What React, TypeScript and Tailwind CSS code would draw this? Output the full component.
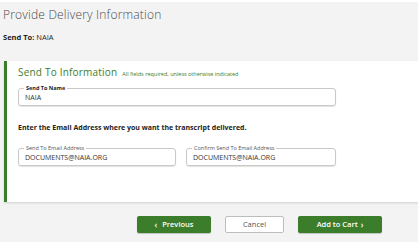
import React from "react";

const GREEN = "bg-[#3c7d2b]";

// bordered input with its label sitting on the top border
const Field: React.FC<{ label: string; value: string; bold?: boolean; className?: string }> = ({ label, value, bold, className }) => (
  <div className={`relative flex h-[18px] items-center rounded-[3px] border border-[#c9c9c9] px-[6px] shadow-[0_1px_1px_rgba(0,0,0,0.12)] ${className ?? ""}`}>
    <span
      className={`absolute -top-[4px] left-[5px] bg-white px-[2px] text-[5.5px] leading-[7px] ${bold ? "font-bold text-[#222]" : "text-[#555]"}`}
    >
      {label}
    </span>
    <span className="pt-[2px] text-[7px] leading-[10px] text-[#333]">{value}</span>
  </div>
);

export default function App() {
  return (
    <div className="flex h-[242px] w-[418px] flex-col bg-white pt-[2px] font-['Open_Sans',sans-serif]">
      <div className="flex flex-1 flex-col bg-[#f3f3f3]">
        {/* Header */}
        <div className="h-[59px] px-[3px] pt-[4px]">
          <h1 className="text-[12px] font-light leading-[17px] tracking-[0.2px] text-[#4a4a4a]">Provide Delivery Information</h1>
          <p className="mt-[9px] text-[7.5px] leading-[10px] text-[#222]">
            <span className="font-bold">Send To:</span> NAIA
          </p>
        </div>

        {/* Card */}
        <div className="ml-[4px] h-[141px] border-l-[3px] border-[#3c7d2b] bg-white pl-[11px] pt-[4px] shadow-[0_1px_2px_rgba(0,0,0,0.15)]">
          <div className="flex items-baseline gap-[5px]">
            <h2 className="text-[10px] leading-[15px] tracking-[0.2px] text-[#3c7d2b]">Send To Information</h2>
            <span className="text-[5.5px] text-[#3c7d2b]">All fields required, unless otherwise indicated</span>
          </div>
          <Field label="Send To Name" value="NAIA" bold className="mt-[8px] w-[318px]" />
          <p className="mt-[17px] text-[7px] font-bold leading-[10px] text-[#222]">
            Enter the Email Address where you want the transcript delivered.
          </p>
          <div className="mt-[15px] flex gap-[10px]">
            <Field label="Send To Email Address" value="DOCUMENTS@NAIA.ORG" className="w-[158px]" />
            <Field label="Confirm Send To Email Address" value="DOCUMENTS@NAIA.ORG" className="w-[150px]" />
          </div>
        </div>

        {/* Buttons */}
        <div className="mt-[14px] flex pl-[137px]">
          <button className={`flex h-[17px] w-[74px] items-center justify-center gap-[5px] rounded-[2px] ${GREEN} text-[7.5px] font-semibold text-white shadow-[0_1px_1px_rgba(0,0,0,0.2)]`}>
            <span className="text-[8px]">‹</span> Previous
          </button>
          <button className="ml-[14px] flex h-[17px] w-[59px] items-center justify-center rounded-[2px] border border-[#bdbdbd] bg-white text-[7.5px] text-[#555]">
            Cancel
          </button>
          <button className={`ml-[14px] flex h-[17px] w-[84px] items-center justify-center gap-[3px] rounded-[2px] ${GREEN} text-[7.5px] font-semibold text-white shadow-[0_1px_1px_rgba(0,0,0,0.2)]`}>
            Add to Cart <span className="text-[8px]">›</span>
          </button>
        </div>
      </div>
    </div>
  );
}
